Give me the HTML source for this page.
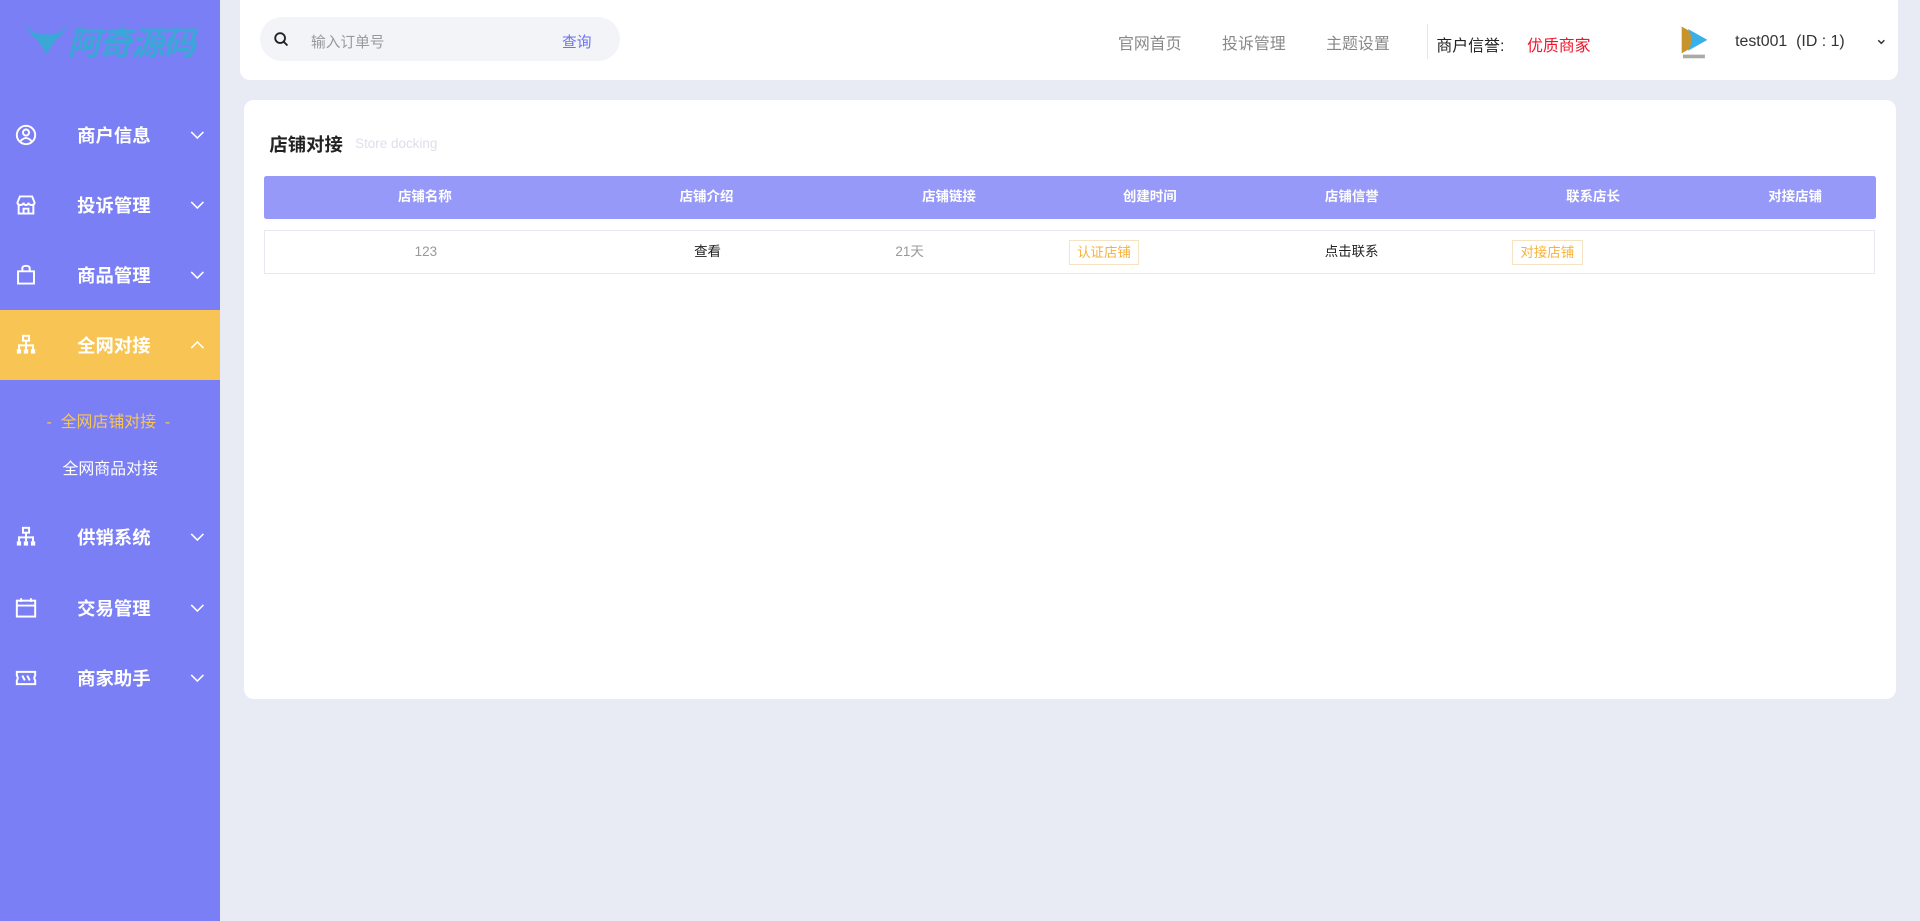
<!DOCTYPE html>
<html><head><meta charset="utf-8"><style>
html,body{margin:0;padding:0;}
body{width:1568px;height:752px;zoom:1.22449;background:#e8ebf3;font-family:"Liberation Sans","Noto Sans CJK SC",sans-serif;position:relative;overflow:hidden;}
.a{position:absolute;white-space:nowrap;}
.side{position:absolute;left:0;top:0;width:180px;height:752px;background:#7b7ff5;}
.mi{position:absolute;left:0;width:180px;height:57px;color:#fff;font-weight:bold;font-size:15px;}
.mi .t{position:absolute;left:63px;top:50%;transform:translateY(-50%);}
.mi svg.ic{position:absolute;left:12px;top:50%;transform:translateY(-50%);}
.mi svg.ch{position:absolute;left:155px;top:50%;transform:translateY(-50%);}
.card{position:absolute;background:#fff;}
.th{position:absolute;top:0;height:35px;line-height:35px;color:#fff;font-weight:bold;font-size:11px;transform:translateX(-50%);}
.td{position:absolute;top:0;height:35px;line-height:35px;font-size:11px;transform:translateX(-50%);}
.tag{position:absolute;top:7px;height:19px;line-height:19px;border:1px solid #f5e4c4;color:#f6b33c;font-size:11px;padding:0 6px;}
</style></head><body>
<div class="side">
  <svg class="a" style="left:18px;top:14px" width="40" height="36" viewBox="0 0 40 36"><path d="M2 4 Q8 16 20 14 Q32 16 38 4 Q34 14 28 18 L20 30 L12 18 Q6 14 2 4Z" fill="#3aa7d6"/></svg>
  <div class="a" style="left:55px;top:14px;font-size:27px;font-weight:bold;font-style:italic;color:#3aa7d6;letter-spacing:-1px;">阿奇源码</div>
  <div class="mi" style="top:82px"><svg class="ic" width="18" height="18" viewBox="0 0 18 18" fill="none" stroke="#fff" stroke-width="1.6"><circle cx="9" cy="9" r="7.5"/><circle cx="9" cy="7" r="2.5"/><path d="M4.5 14 Q9 9 13.5 14"/></svg><span class="t">商户信息</span><svg class="ch" width="12" height="8" viewBox="0 0 12 8" fill="none" stroke="#fff" stroke-width="1.3"><path d="M1 1.5L6 6.5L11 1.5"/></svg></div>
  <div class="mi" style="top:139px"><svg class="ic" width="18" height="18" viewBox="0 0 18 18" fill="none" stroke="#fff" stroke-width="1.6"><path d="M2 7 L4 2 H14 L16 7 Q16 9 13.5 9 Q11 9 11 7 Q11 9 9 9 Q7 9 7 7 Q7 9 4.5 9 Q2 9 2 7Z M3 9 V16 H15 V9 M7 16 V12 H11 V16"/></svg><span class="t">投诉管理</span><svg class="ch" width="12" height="8" viewBox="0 0 12 8" fill="none" stroke="#fff" stroke-width="1.3"><path d="M1 1.5L6 6.5L11 1.5"/></svg></div>
  <div class="mi" style="top:196px"><svg class="ic" width="18" height="18" viewBox="0 0 18 18" fill="none" stroke="#fff" stroke-width="1.6"><path d="M2.5 6 H15.5 V16 H2.5Z M6 6 V3.5 Q6 1.5 9 1.5 Q12 1.5 12 3.5 V6"/></svg><span class="t">商品管理</span><svg class="ch" width="12" height="8" viewBox="0 0 12 8" fill="none" stroke="#fff" stroke-width="1.3"><path d="M1 1.5L6 6.5L11 1.5"/></svg></div>
  <div class="mi" style="top:253px;background:#f8c555"><svg class="ic" width="18" height="18" viewBox="0 0 18 18" fill="#fff"><rect x="6.5" y="1.5" width="5" height="4" fill="none" stroke="#fff" stroke-width="1.6"/><rect x="8.2" y="5" width="1.6" height="4"/><rect x="2.5" y="8.5" width="13" height="1.6"/><rect x="2.5" y="8.5" width="1.6" height="4"/><rect x="13.9" y="8.5" width="1.6" height="4"/><rect x="8.2" y="8.5" width="1.6" height="4"/><rect x="1.5" y="12.5" width="3.5" height="3.5"/><rect x="7.2" y="12.5" width="3.5" height="3.5"/><rect x="13" y="12.5" width="3.5" height="3.5"/></svg><span class="t">全网对接</span><svg class="ch" width="12" height="8" viewBox="0 0 12 8" fill="none" stroke="#fff" stroke-width="1.3"><path d="M1 6.5L6 1.5L11 6.5"/></svg></div>
  <div class="a" style="left:38px;top:334px;font-size:13px;color:#f8c555;">-&nbsp;&nbsp;全网店铺对接&nbsp;&nbsp;-</div>
  <div class="a" style="left:51px;top:372px;font-size:13px;color:#fff;">全网商品对接</div>
  <div class="mi" style="top:410px"><svg class="ic" width="18" height="18" viewBox="0 0 18 18" fill="#fff"><rect x="6.5" y="1.5" width="5" height="4" fill="none" stroke="#fff" stroke-width="1.6"/><rect x="8.2" y="5" width="1.6" height="4"/><rect x="2.5" y="8.5" width="13" height="1.6"/><rect x="2.5" y="8.5" width="1.6" height="4"/><rect x="13.9" y="8.5" width="1.6" height="4"/><rect x="8.2" y="8.5" width="1.6" height="4"/><rect x="1.5" y="12.5" width="3.5" height="3.5"/><rect x="7.2" y="12.5" width="3.5" height="3.5"/><rect x="13" y="12.5" width="3.5" height="3.5"/></svg><span class="t">供销系统</span><svg class="ch" width="12" height="8" viewBox="0 0 12 8" fill="none" stroke="#fff" stroke-width="1.3"><path d="M1 1.5L6 6.5L11 1.5"/></svg></div>
  <div class="mi" style="top:468px"><svg class="ic" width="18" height="18" viewBox="0 0 18 18" fill="none" stroke="#fff" stroke-width="1.6"><rect x="1.5" y="3" width="15" height="13"/><path d="M1.5 7 H16.5 M5 1 V4 M13 1 V4"/></svg><span class="t">交易管理</span><svg class="ch" width="12" height="8" viewBox="0 0 12 8" fill="none" stroke="#fff" stroke-width="1.3"><path d="M1 1.5L6 6.5L11 1.5"/></svg></div>
  <div class="mi" style="top:525px"><svg class="ic" width="18" height="18" viewBox="0 0 18 18" fill="none" stroke="#fff" stroke-width="1.6"><path d="M1.5 4 H16.5 V7 Q15 9 16.5 11 V14 H1.5 V11 Q3 9 1.5 7Z M6 7 L8 11 M10 7 L12 11"/></svg><span class="t">商家助手</span><svg class="ch" width="12" height="8" viewBox="0 0 12 8" fill="none" stroke="#fff" stroke-width="1.3"><path d="M1 1.5L6 6.5L11 1.5"/></svg></div>
</div>

<div class="card" style="left:196px;top:0;width:1354px;height:65px;border-radius:0 0 8px 8px;">
  <div class="a" style="left:16px;top:14px;width:294px;height:36px;border-radius:18px;background:#f3f4f8;">
    <svg class="a" style="left:12px;top:12px" width="12" height="12" viewBox="0 0 12 12" fill="none" stroke="#222" stroke-width="1.5"><circle cx="5" cy="5" r="4"/><path d="M8 8L11 11"/></svg>
    <span class="a" style="left:42px;top:11px;font-size:12px;color:#999;">输入订单号</span>
    <span class="a" style="left:247px;top:11px;font-size:12px;color:#6b6ff0;">查询</span>
  </div>
  <span class="a" style="left:717px;top:25px;font-size:13px;color:#888;">官网首页</span>
  <span class="a" style="left:802px;top:25px;font-size:13px;color:#888;">投诉管理</span>
  <span class="a" style="left:887px;top:25px;font-size:13px;color:#888;">主题设置</span>
  <div class="a" style="left:969px;top:20px;width:1px;height:28px;background:#e6e6e6;"></div>
  <span class="a" style="left:977px;top:27px;font-size:13px;color:#222;">商户信誉:</span>
  <span class="a" style="left:1051px;top:27px;font-size:13px;color:#f0142a;">优质商家</span>
  <svg class="a" style="left:1174px;top:20px" width="26" height="30" viewBox="0 0 26 30"><path d="M3 2 L22 13 L3 24Z" fill="#c6932d"/><path d="M8 4 L24 13 L8 22 Q14 13 8 4Z" fill="#3ab0e8"/><rect x="4" y="25" width="18" height="3" fill="#aaa"/></svg>
  <span class="a" style="left:1221px;top:27px;font-size:13px;color:#333;">test001&nbsp;&nbsp;(ID : 1)</span>
  <svg class="a" style="left:1337px;top:32px" width="7" height="5" viewBox="0 0 7 5" fill="none" stroke="#333" stroke-width="1.2"><path d="M1 1L3.5 3.5L6 1"/></svg>
</div>

<div class="card" style="left:199px;top:82px;width:1349px;height:489px;border-radius:8px;">
  <span class="a" style="left:21px;top:25px;font-size:15px;font-weight:bold;color:#222;">店铺对接</span>
  <span class="a" style="left:91px;top:29px;font-size:11px;color:#dde0ea;">Store docking</span>
  <div class="a" style="left:17px;top:62px;width:1316px;height:35px;background:#9699f8;border-radius:2px;">
    <span class="th" style="left:131px">店铺名称</span>
    <span class="th" style="left:361px">店铺介绍</span>
    <span class="th" style="left:559px">店铺链接</span>
    <span class="th" style="left:723px">创建时间</span>
    <span class="th" style="left:888px">店铺信誉</span>
    <span class="th" style="left:1085px">联系店长</span>
    <span class="th" style="left:1250px">对接店铺</span>
  </div>
  <div class="a" style="left:17px;top:106px;width:1314px;height:34px;border:1px solid #e8e8f0;">
    <span class="td" style="left:131px;color:#999">123</span>
    <span class="td" style="left:361px;color:#222">查看</span>
    <span class="td" style="left:526px;color:#999">21天</span>
    <span class="tag" style="left:656px">认证店铺</span>
    <span class="td" style="left:887px;color:#222">点击联系</span>
    <span class="tag" style="left:1018px">对接店铺</span>
  </div>
</div>
</body></html>
